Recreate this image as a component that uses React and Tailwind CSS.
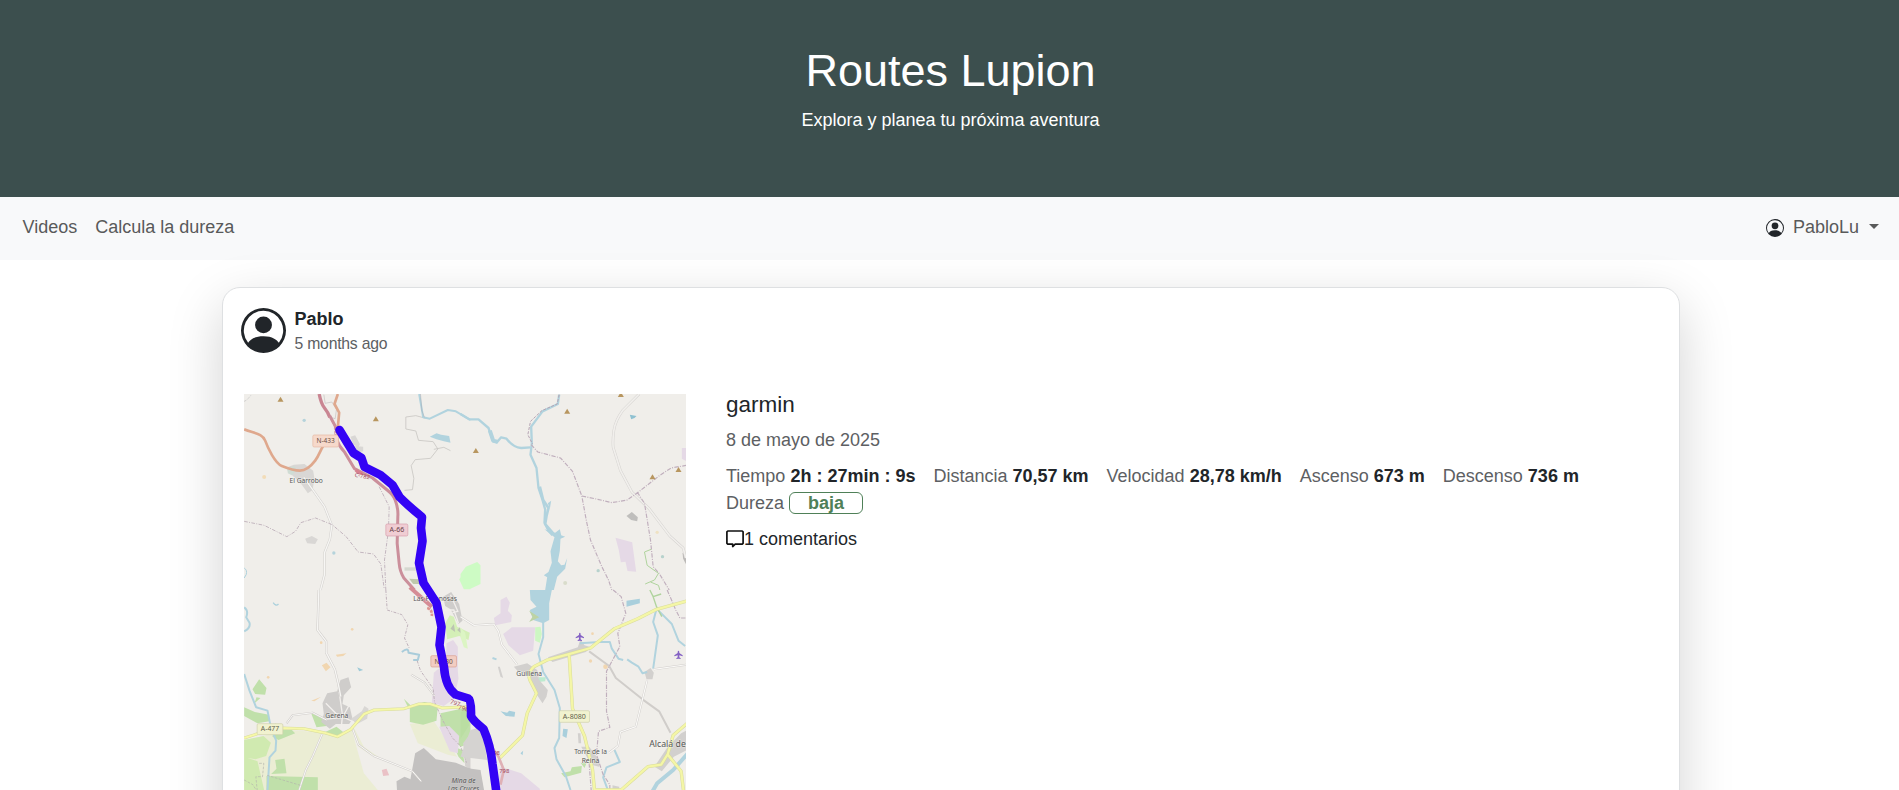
import React from "react";

const stats = [
  ["Tiempo", "2h : 27min : 9s"],
  ["Distancia", "70,57 km"],
  ["Velocidad", "28,78 km/h"],
  ["Ascenso", "673 m"],
  ["Descenso", "736 m"],
];

function PersonCircle({ className }) {
  return (
    <svg viewBox="0 0 16 16" fill="#212529" className={className}>
      <path d="M11 6a3 3 0 1 1-6 0 3 3 0 0 1 6 0" />
      <path
        fillRule="evenodd"
        d="M0 8a8 8 0 1 1 16 0A8 8 0 0 1 0 8m8-7a7 7 0 0 0-5.468 11.37C3.242 11.226 4.805 10 8 10s4.757 1.225 5.468 2.37A7 7 0 0 0 8 1"
      />
    </svg>
  );
}

function Label({ x, y, size = 20, width, children, color = "#555", italic, halo = "#f6f4f0" }) {
  return (
    <text
      x={x}
      y={y}
      fontSize={size}
      fill={color}
      textAnchor="middle"
      textLength={width}
      lengthAdjust="spacingAndGlyphs"
      fontStyle={italic ? "italic" : "normal"}
      stroke={halo}
      strokeOpacity="0.7"
      strokeWidth="3"
      paintOrder="stroke"
    >
      {children}
    </text>
  );
}

function Shield({ x, y, w, h, fill, stroke, color, children }) {
  return (
    <g>
      <rect x={x} y={y} width={w} height={h} rx="4" fill={fill} stroke={stroke} strokeWidth="2" />
      <text
        x={x + w / 2}
        y={y + h / 2 + 7}
        fontSize="19"
        textLength={w - 22}
        lengthAdjust="spacingAndGlyphs"
        fill={color}
        textAnchor="middle"
      >
        {children}
      </text>
    </g>
  );
}

const Peak = ({ x, y }) => <path d={`M${x} ${y - 8}l9 15h-18z`} fill="#b8965f" />;

const Plane = ({ x, y }) => (
  <path
    transform={`translate(${x} ${y})`}
    fill="#8461c4"
    d="M0-12c2.500 0 2.500 3 2.500 7l10 7v3l-10-3v6l4 3v2l-6.500-1-6.500 1v-2l4-3V2l-10 3V2l10-7c0-4 0-7 2.500-7"
  />
);

function NorthWest() {
  return (
    <g transform="translate(240 390) scale(.33333)">
      <g fill="#d9d7d5">
        <path d="M140 232l20-8 32-2 26 20 4 24-6 34-14 10-18-26-16-16-26-24z" />
        <path d="M194 446l20-8 18 10-8 14-24-2zM330 140l14-4 14 26-4 12-16-12zM344 168l24 2v14l-18 4z" />
      </g>
      <path d="M492 532h34v10h-34z" fill="#d5d8d0" />
      <path d="M506 566l30 2 6 14-24 0z" fill="#bfc8ac" />
      <path d="M656 568l34-36v66l-20 0z" fill="#cdfbc4" />
      <path d="M140 234l22-6 6 14-14 14-12-6z" fill="#cfdcd4" />
      <path d="M568 140l20-10 14 4 24 4 4 20-20-4-22-6z" fill="#b1d3de" />
      <g fill="#b5d3db">
        <circle cx="191" cy="91" r="5" />
        <circle cx="280" cy="489" r="5" />
      </g>
      <circle cx="71" cy="261" r="6" fill="#f2dcb8" />
      <path d="M11 534q10 6 6 20l-6 10" stroke="#abd0dc" strokeWidth="3" fill="none" />
      <path d="M11 34q10-4 20-18" stroke="#bbb" strokeWidth="2" strokeDasharray="8 4" fill="none" />
      <g fill="none" strokeLinejoin="round">
        <path d="M190 262l30 42 32 46 22 56-6 42-16 40 0 66-12 46" stroke="#d2d0cd" strokeWidth="7" />
        <path d="M190 262l30 42 32 46 22 56-6 42-16 40 0 66-12 46" stroke="#f7f6f4" strokeWidth="4" />
        <path d="M556 85l-30-8-30 4 0 36 30 6 8 28 44 4 14 22-22 28-46 4-12 18 8 38-4 34-24 2M580 178l30-6 20 10" stroke="#c9c7c3" strokeWidth="2.500" />
        <path d="M11 394l60 12 68 34 26-16 16-26 44-14 50 20 42 36 36 46 46 6 22 30 10 74M416 290l30 60-2 70-12 90 4 90" stroke="#c3b6bf" strokeWidth="3" strokeDasharray="11 4 3 4" />
        <path d="M536 12l12 70 20 4 54-26 24 4 44 26" stroke="#b1d3de" strokeWidth="6" />
        <path d="M540 12l4 50 8 20" stroke="#a9a8b0" strokeWidth="1.500" />
        <path d="M250 14l4 26 20-4 14 22-4 28-14-4" stroke="#c4c0c0" strokeWidth="2" />
        <path d="M11 118C40 130 66 130 74 152S104 220 124 228S160 242 178 242S212 228 224 212S240 180 248 168M292 12l-10 30 14 26-4 44" stroke="#dfa88d" strokeWidth="8" />
        <path d="M236 12q6 30 16 42t16 28" stroke="#c98592" strokeWidth="10" />
        <path d="M268 78l16 30 4 40q8 22 24 38l30 50 54 28 44 36q20 16 24 30 10 26 8 50l-2 80 6 60q2 24 14 44l32 36" stroke="#cb8f9b" strokeWidth="9" />
        <path d="M262 84l18 30 8 24" stroke="#f4e7ea" strokeWidth="3" strokeDasharray="6 4" />
        <path d="M346 240q8 10 20 10" stroke="#d6808f" strokeWidth="10" />
      </g>
      <Peak x={120} y={28} />
      <Peak x={406} y={87} />
    </g>
  );
}

function NorthEast() {
  return (
    <g transform="translate(460 390) scale(.33333)">
      <path d="M0 552l16-22 34-14 10 10v56l-30 14-30-28z" fill="#cdfbc4" />
      <path d="M465 443l50 14 12 88-26-2-6-28-14 2-6-36z" fill="#e5d9e6" />
      <path d="M664 174h14v40l-14-8z" fill="#e5d9e6" />
      <path d="M498 378l16-12 18 16-2 12-18-4z" fill="#bfbebc" />
      <path d="M666 488l12 8v30l-10-20z" fill="#bcbab8" />
      <path d="M508 74l20 4-6 6-10 4z" fill="#8fc1d1" />
      <g fill="#b7d2cd">
        <circle cx="606" cy="500" r="5" />
        <circle cx="413" cy="542" r="5" />
        <circle cx="314" cy="579" r="6" fill="#d9dccb" />
        <circle cx="590" cy="427" r="5" fill="#efe2c3" />
      </g>
      <g fill="none" strokeLinejoin="round">
        <path d="M536 12l-50 50q-22 30-26 60t-2 50l22 70 34 64 52 50 62 82 40 36 8 30" stroke="#d5d3d0" strokeWidth="8" />
        <path d="M536 12l-50 50q-22 30-26 60t-2 50l22 70 34 64 52 50 62 82 40 36 8 30" stroke="#f1efec" strokeWidth="5" />
        <path d="M0 72l26 16 28 0 30 26 14 40 12 2 12-14 16 4q20 26 44 28l28-2" stroke="#b1d3de" strokeWidth="7" />
        <path d="M88 122l10 30 14 4" stroke="#b1d3de" strokeWidth="12" />
        <path d="M296 14l-4 28-46 22-34 46 2 50-4 34 18 40 6 60 12 36 8 28-2 40 12 24 12 14" stroke="#b1d3de" strokeWidth="7" />
        <path d="M238 290l10 40 16 24-6 24-4 24 24 28" stroke="#b1d3de" strokeWidth="8" />
        <path d="M296 14l-6 28-46 20-34 32-8 40 14 28" stroke="#b5a3b3" strokeWidth="3" strokeDasharray="9 4" />
        <path d="M212 164l20 22 68 18 36 40 28 74 14 76 12 56 34 80 20 40 10 30M364 318l48 10 42 10 46-8 34-24 64-50 34-22 46-8M530 306l22 34 18 110 8 80 18 20 30 50" stroke="#c0afbd" strokeWidth="3.500" strokeDasharray="13 4 3 4" />
        <path d="M572 478l-20 8 8 40 34 24-12 20-28 12M570 576l24 10 4 14" stroke="#afd39d" strokeWidth="3" />
      </g>
      <path d="M252 418l32 10 14-10 4 18 12 4-14 6-2 36-6 32 10 12 10-2 8-20-6 32-24 24-10 40-26 0 6-38-10-6 14-10 10-28-4-34 12-42z" fill="#b1d3de" />
      <path d="M262 340l10-8-4 24z" fill="#b1d3de" />
      <Peak x={46} y={182} />
      <Peak x={320} y={64} />
      <Peak x={481} y={14} />
      <Peak x={576} y={261} />
      <Peak x={654} y={239} />
    </g>
  );
}

function SouthWest() {
  return (
    <g transform="translate(240 590) scale(.33333)">
      <path d="M11 450l60-12 55-20 120 10 54 12 42-24 28 54 60 42 66 28 40 22 0 180H11z" fill="#ebedd4" />
      <path d="M334 420l20 50 36 24 130 56 20 60H420l-50-60z" fill="#f0eeea" />
      <path d="M508 402l70-12 26 40 46 70-28-6-90-34z" fill="#ebedd4" />
      <path d="M11 450l58-12 22 20-14 40-32 10-34-6zM11 500l40 14 20 86H11z" fill="#d0eab0" />
      <path
        fill="#c0e0aa"
        d="M36 298l20-30 22 26-4 20-30-2zM48 322l12 2-18 16zM11 352l32 14 42 8 2 20-36 6-40-22zM104 400l20 20 30 0 10 10-50 20-18-10zM212 370l46 16 0 22-30 4zM104 510l28-4 6 44-46 2 16-16zM78 558l154 4v38H78zM508 350l44-14 40 12-4 44-40 12-40-8zM600 370l90-20v110l-30 10-60-60zM640 470l26 10 6 40-18-20zM490 326l20 20-8 4zM288 410l20 16-22 14-40-10z"
      />
      <g fill="#cfcdcb">
        <path d="M246 340l14-30 30-6 10-34 24-8 8 30-22 24-4 26 22 10 8 34-10 16-40 0-18 14-26-20 8-24z" />
        <path d="M330 388l34-24 8-16 12 8-4 30-30 16z" fill="#d9d7d4" />
        <path d="M608 20l24-14 24 36 10 50-12 10-24-44-16-10z" />
        <path d="M668 460l22-30v110l-16-12z" fill="#d5d2d0" />
      </g>
      <path d="M256 340l30 30 22 8 20-36M250 388l60-6 30 14M296 306l10 70-4 40M610 60l30 0 14 40M630 14l22 50-16 4" fill="none" stroke="#f2efec" strokeWidth="4" />
      <path d="M614 100l14-24 12 4 10 30 38 18-4 22-28-12-36 10z" fill="#d4efb7" />
      <path d="M630 116l10-14 4 24zM650 120l8-8 6 20z" fill="#bcc3b2" />
      <g fill="#e5d9e6">
        <path d="M618 160l20-10 14 20 0 74 2 22-14 60-30 22-36-10 6-90 12-10 24-4z" />
        <path d="M596 410l30-2 30 30-4 52-24-6z" />
      </g>
      <path d="M524 490l26-16 36 34 60 10 44 18v120H534l-4-60-20-30z M468 574l24-14 48 20 10 30H470z" fill="#c3c1c0" />
      <path d="M424 540l14-4 8 20-18 2z" fill="#eac1c6" />
      <g fill="#f1d6b0">
        <path d="M244 226l14-8 12 14-14 12z" />
        <path d="M286 194l32-4-10 8-18 2zM212 332l30-12-20 14z" />
        <circle cx="83" cy="262" r="4" />
        <circle cx="242" cy="158" r="4" />
        <circle cx="335" cy="118" r="4" />
      </g>
      <path d="M350 232l18 8-12 4z" fill="#9ecad7" />
      <path d="M98 38q8 12 16 4" stroke="#abd0dc" strokeWidth="4" fill="none" />
      <g fill="none" strokeLinejoin="round">
        <path d="M11 52q14 10 6 30l10 16q4 16-16 26M11 252l16 50 20 50 34 10 10 50 16 40-2 30-18 20-6 98" stroke="#b1d3de" strokeWidth="6" />
        <path d="M484 186q20-16 20 2l32 6-4 16-14 0" stroke="#a9ccda" strokeWidth="6" />
        <path d="M235 0l-4 120 26 34 0 34 26 50 10 42 8 40" stroke="#cfccc9" strokeWidth="7" />
        <path d="M235 0l-4 120 26 34 0 34 26 50 10 42 8 40" stroke="#f7f6f4" strokeWidth="4" />
        <path d="M138 400l18-24 60-8 42 22M246 430l-30 70-20 40-20 60M334 410l20 54 46 34 116 46 26 30M512 254l40 24 30 40" stroke="#d1cecb" strokeWidth="6" />
        <path d="M138 400l18-24 60-8 42 22M246 430l-30 70-20 40-20 60M334 410l20 54 46 34 116 46 26 30M512 254l40 24 30 40" stroke="#faf9f7" strokeWidth="3" />
        <path d="M436 0l4 60 44 14 18 30-10 40 14 30M530 212l10 30 38 54 4 40 24 54 30 54 24 24 18 50" stroke="#c0b2bb" strokeWidth="3" strokeDasharray="9 4 3 4" />
        <path d="M11 570l26 14 10 16M56 520h14l-4 40-20 0 4 40M80 556l100 30" stroke="#b4b4ac" strokeWidth="2" strokeDasharray="8 4" />
        <path d="M11 444l50-16 60-14 70 2 60 12 40 12 40-22 40-46 30-12 90-4 44-14 34 0 36 12 76-4" stroke="#d8db9c" strokeWidth="9" />
        <path d="M11 444l50-16 60-14 70 2 60 12 40 12 40-22 40-46 30-12 90-4 44-14 34 0 36 12 76-4" stroke="#f6f8a8" strokeWidth="6" />
        <path d="M508-8l66 58" stroke="#d58c95" strokeWidth="12" />
        <path d="M560 54q16 4 14 24" stroke="#dd9490" strokeWidth="8" strokeDasharray="9 3" />
      </g>
    </g>
  );
}

function SouthEast() {
  return (
    <g transform="translate(460 590) scale(.33333)">
      <path
        fill="#e5d9e6"
        d="M120 30l18-10 10 18-6 24 12 14-2 20-48 10-4-22 20-14zM128 132l26-20 70 0-6 70-40 14-34-30zM120 530l62 20 56 46v10H110z"
      />
      <path d="M0 366l16-6 10 46-26 40z" fill="#badea2" />
      <path d="M30 420l34-10 16 100-80-10z" fill="#d5d3d1" />
      <path d="M0 532l60 8 16 90H0z" fill="#c3c1c0" />
      <path d="M208 0h66l-8 40 0 50-18 10-30-10-10-30 20-10-18-20z" fill="#b1d3de" />
      <path d="M206 62l30 20-30 14 10-16z" fill="#bdd3a4" />
      <path d="M224 112l16-2 4 22-6 26-14-6z" fill="#cdf7c3" />
      <path d="M234 262l22 0-2 12-20 2z" fill="#bdebcf" />
      <path d="M0 112l14 16 8 48-12-4-10-30z" fill="#dcf5c4" />
      <path
        fill="#d2d0ce"
        d="M160 230l40-10 30 20 6 30 26 30-4 20-12 20-24-36-20-50-30-10zM262 202l90-30 8-24 12 18 20 6-16 14-100 30zM552 246l18-12 10 14-4 20-18 0zM582 530l40-60 40-40 18-10 0 60-40 20-36 44zM362 470l24 0 30 40 0 20-24-6zM112 230l6 0 10 34-8-4zM352 430h8l2 30h-8zM456 586l20 4 0 10h-20z"
      />
      <path d="M302 550l28-6 4-12 30-4-2 20-50 14zM360 518l18 2-6 14z" fill="#c0e0aa" />
      <path d="M308 416l14 2-4 26-12-6zM120 364l20 4 6-6 18 4-2 14-26-2zM180 490l8-8-2 14zM498 32l40-6 0 14-40 10z" fill="#a9cfdc" />
      <g fill="#f1d6b0">
        <circle cx="390" cy="213" r="5" />
        <circle cx="435" cy="230" r="7" />
        <circle cx="396" cy="131" r="4" />
      </g>
      <g fill="none" strokeLinejoin="round">
        <path d="M248 96l0 46-14 50 14 54 34 54 16 54-2 90-14 30 6 34 28 50 14 42M96 204l12 4M358 160l60-4 30 0 6 20 20 30 14 4M500 208l14 10 20 12 12 20 14-4M588 56l-10 40 14 40-14 100M588 56l46 46 20 50 20 16M462 480l16 36-40 16-10 30 14 38" stroke="#b1d3de" strokeWidth="6" />
        <path d="M682 490l-44 50-48 40-14 24" stroke="#b1d3de" strokeWidth="12" />
        <path d="M0 80l40 26 60-4 14 22 10 40 46 60M386 184l60 44 20 36 80 64 50 36 34 64M560 270l-34 140-46 16-8 42-26 20M580 238l98-14" stroke="#d0cdca" strokeWidth="6" />
        <path d="M0 80l40 26 60-4 14 22 10 40 46 60M560 270l-34 140-46 16-8 42-26 20M580 238l98-14" stroke="#faf9f7" strokeWidth="3.500" />
        <path d="M458 0l24 20 14 50-24 60 6 40-40 74 0 120 10 48-34 12-6 70 20 60 20 30 0 16M620 0l26 60 12 24 20 0M386 520l6 80" stroke="#c0afbd" strokeWidth="3.500" strokeDasharray="13 4 3 4" />
        <path d="M568 0l10 20 10 30 16 30M578 20l24-8" stroke="#afd39d" strokeWidth="4" />
        <path d="M682 32l-94 26-56 28-70 30-72 58-70 20-60 16-40 20q-20 20-12 40l20 40-28 60-14 66-70 70M326 196l10 160 36 82 24 100 6 62M402 600h80l80-70 40-6 20-32 16-56 42-36M622 494l40 50 8 66" stroke="#d8db9c" strokeWidth="10" />
        <path d="M682 32l-94 26-56 28-70 30-72 58-70 20-60 16-40 20q-20 20-12 40l20 40-28 60-14 66-70 70M326 196l10 160 36 82 24 100 6 62M402 600h80l80-70 40-6 20-32 16-56 42-36M622 494l40 50 8 66" stroke="#f4f6a6" strokeWidth="7" />
        <path d="M90 466l24 34 16 40-10 44" stroke="#dfb0b5" strokeWidth="8" />
      </g>
      <Plane x={358} y={140} />
      <Plane x={654} y={194} />
    </g>
  );
}

function MapLabels() {
  return (
    <>
      <g transform="translate(240 390) scale(.33333)">
        <Label x={197} y={280} width={100}>El Garrobo</Label>
        <text x="342" y="260" fontSize="17" fill="#a1485b" transform="rotate(10 342 260)">C-782</text>
        <Shield x={217} y={135} w={77} h={36} fill="#f6d9cb" stroke="#e5b8a2" color="#6b4d43">N-433</Shield>
        <Shield x={436} y={402} w={66} h={36} fill="#f0cdd3" stroke="#d79daa" color="#6b3d48">A-66</Shield>
      </g>
      <g transform="translate(240 590) scale(.33333)">
        <Label x={584} y={34} width={131}>Las Pajanosas</Label>
        <Label x={289} y={384} width={69}>Gerena</Label>
        <Label x={669} y={578} size={19} width={72} italic halo="#d4d2d1">Mina de</Label>
        <Label x={669} y={602} size={19} width={94} italic halo="#d4d2d1">Las Cruces</Label>
        <text x="628" y="340" fontSize="18" fill="#a1485b" transform="rotate(18 628 340)">797</text>
        <text x="652" y="358" fontSize="18" fill="#a1485b" transform="rotate(12 652 358)">798</text>
        <Shield x={50} y={401} w={77} h={33} fill="#f1f2cf" stroke="#cfd0aa" color="#5d5e49">A-477</Shield>
        <Shield x={571} y={197} w={77} h={34} fill="#f2cdc2" stroke="#d9a090" color="#6b4d43">N-630</Shield>
      </g>
      <g transform="translate(460 590) scale(.33333)">
        <text x="98" y="494" fontSize="18" fill="#a1485b">98</text>
        <text x="116" y="548" fontSize="18" fill="#a1485b">798</text>
        <Label x={206} y={257} width={77}>Guillena</Label>
        <Label x={390} y={491} width={98}>Torre de la</Label>
        <Label x={390} y={518} width={53}>Reina</Label>
        <Label x={621} y={470} size={25} width={110}>Alcalá de</Label>
        <Shield x={296} y={362} w={91} h={35} fill="#f1f2cf" stroke="#cfd0aa" color="#5d5e49">A-8080</Shield>
      </g>
    </>
  );
}

function RouteMap() {
  return (
    <svg
      viewBox="243.500 394 442.500 442"
      className="block h-[442px] w-[442.5px] overflow-hidden bg-[#f0eeea] font-['Noto_Sans',sans-serif]"
    >
      <NorthWest />
      <NorthEast />
      <SouthWest />
      <SouthEast />
      <MapLabels />
      <path
        d="M339 430L353 453L361 458L364 467L380 475L392 485L399 497Q408 506 421.500 517L420.500 528L422 541L418.500 563L423 583L436 603L441 627L439 645L443.500 667Q445 687 455 694.500L468 698.500Q471 700 470.500 716Q472 720 483 729Q490 745 492 764L497 800"
        fill="none"
        stroke="#3403f5"
        strokeWidth="8.600"
        strokeLinecap="round"
        strokeLinejoin="round"
      />
    </svg>
  );
}

export default function App() {
  return (
    <div className="h-[790px] overflow-hidden bg-white font-['Liberation_Sans',Arial,sans-serif] text-[18px] leading-[27px] text-[#212529]">
      <header className="flex h-[197px] flex-col items-center bg-[#3c4f4e] pt-[44px] pl-[2px] text-white">
        <h1 className="mb-[9px] text-[45px] leading-[54px]">Routes Lupion</h1>
        <p>Explora y planea tu próxima aventura</p>
      </header>

      <nav className="flex h-[63px] items-center justify-between bg-[#f8f9fa] pr-[20px] pb-[2px] pl-[22.5px] text-[#595a5a]">
        <div className="flex gap-[18px]">
          <a>Videos</a>
          <a>Calcula la dureza</a>
        </div>
        <div className="flex items-center">
          <PersonCircle className="mt-px mr-[9px] size-[18px]" />
          <span>PabloLu</span>
          <span className="mb-[3px] ml-[10px] border-x-[5px] border-t-[5px] border-x-transparent border-t-[#595a5a]" />
        </div>
      </nav>

      <main className="pt-[27px] pl-[222px]">
        <article className="h-[640px] w-[1458px] rounded-[18px] border border-[#dee0e2] bg-white pl-[18px] shadow-[0_18px_54px_rgba(0,0,0,0.175)]">
          <div className="flex pt-[18px]">
            <PersonCircle className="mt-[2px] mr-[8.5px] size-[45px]" />
            <div>
              <p className="font-bold">Pablo</p>
              <p className="text-[15.75px] leading-[22.6px] tracking-[-0.22px] text-[#5d6063]">5 months ago</p>
            </div>
          </div>

          <div className="mt-[36px] flex pl-[2.5px]">
            <div className="mt-[2px] shrink-0">
              <RouteMap />
            </div>
            <div className="-mt-px ml-[40px] w-[918px]">
              <h2 className="mb-[9px] text-[22.5px] leading-[27px]">garmin</h2>
              <p className="mb-[9px] text-[#5d6063]">8 de mayo de 2025</p>
              <div className="mb-[9px] flex flex-wrap gap-x-[18px]">
                {stats.map(([name, value]) => (
                  <span key={name} className="text-[#5d6063]">
                    {name} <b className="text-[#212529]">{value}</b>
                  </span>
                ))}
                <div className="flex basis-full items-center gap-[5px] text-[#5d6063]">
                  Dureza
                  <b className="flex h-[22px] w-[74px] items-center justify-center rounded-[6px] border border-[#4f8058] text-[#4f8058]">
                    baja
                  </b>
                </div>
              </div>
              <div className="flex items-center">
                <svg viewBox="0 0 18 18" className="size-[18px]" fill="none" stroke="#111" strokeWidth="1.7">
                  <path d="M1.800 1h14.400l.9.9v11.400l-.9.9H9.200l-2.500 2.300v-2.300H1.800l-.9-.9V1.900z" strokeLinejoin="round" />
                </svg>
                <span>1 comentarios</span>
              </div>
            </div>
          </div>
        </article>
      </main>
    </div>
  );
}
